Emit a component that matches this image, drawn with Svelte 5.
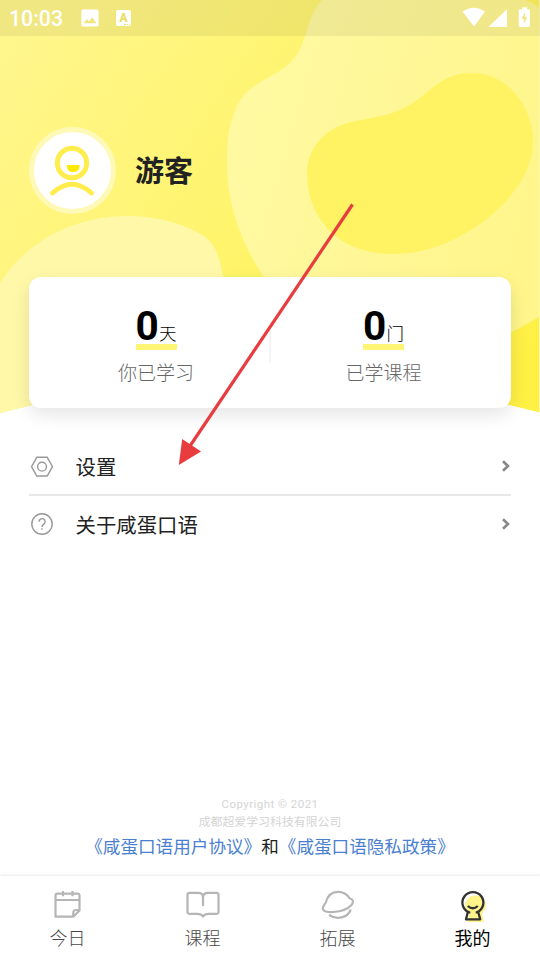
<script lang="ts">
  type Stat = { value: number; unit: string; label: string };
  type Tab = { id: string; label: string };

  const stats: Stat[] = [
    { value: 0, unit: '天', label: '你已学习' },
    { value: 0, unit: '门', label: '已学课程' }
  ];

  const menu = [
    { id: 'settings', label: '设置' },
    { id: 'about', label: '关于咸蛋口语' }
  ];

  const tabs: Tab[] = [
    { id: 'today', label: '今日' },
    { id: 'course', label: '课程' },
    { id: 'explore', label: '拓展' },
    { id: 'mine', label: '我的' }
  ];

  let active = $state('mine');
</script>

<div class="screen">
  <svg class="backdrop" viewBox="0 0 540 420" aria-hidden="true">
    <defs>
      <linearGradient id="sun" gradientUnits="userSpaceOnUse" x1="0" y1="60" x2="500" y2="400">
        <stop offset="0" stop-color="#fff68c" />
        <stop offset="0.5" stop-color="#fff46a" />
        <stop offset="1" stop-color="#fff044" />
      </linearGradient>
      <linearGradient id="pale" gradientUnits="userSpaceOnUse" x1="230" y1="150" x2="540" y2="240">
        <stop offset="0" stop-color="#fff9a2" />
        <stop offset="1" stop-color="#fff58a" />
      </linearGradient>
      <clipPath id="dome">
        <path d="M0 0H539.4V412.5Q270 342 0 413Z" />
      </clipPath>
    </defs>
    <g clip-path="url(#dome)">
      <rect width="540" height="420" fill="url(#sun)" />
      <path
        fill="url(#pale)"
        d="M322 0C307 17 308 34 300 49C287 75 260 77 245 94C230 112 227 136 227 162C227 207 242 243 263 276C310 350 395 366 455 351C490 343 518 331 540 316V9C536 5 531 2 526 0Z"
      />
      <path
        fill="#fff263"
        d="M307 173C307 154 318 138 332 130C354 116 382 122 411 104C431 92 441 73 472 73C508 73 533 107 533 142C533 166 518 192 493 214C463 239 428 254 393 254C334 254 307 214 307 173Z"
      />
      <path
        fill="#fff8a8"
        d="M0 283C27 240 76 216 127 216C158 216 185 224 204 236C217 246 220 259 223 277L240 420H0Z"
      />
    </g>
  </svg>

  <div class="statusbar">
    <span class="clock">10:03</span>
    <svg class="picture" width="18" height="18" viewBox="0 0 18 18" aria-hidden="true">
      <path
        fill="#fff"
        fill-rule="evenodd"
        d="M2 .5h14a1.6 1.6 0 0 1 1.6 1.6v13.8a1.6 1.6 0 0 1-1.6 1.6H2a1.6 1.6 0 0 1-1.6-1.6V2.1A1.6 1.6 0 0 1 2 .5zM2.6 14.3h12.8L11.2 8.6 8 12.5 5.8 9.9z"
      />
    </svg>
    <span class="letter">A<i></i></span>
    <svg class="signals" width="70" height="22" viewBox="0 0 70 22" aria-hidden="true">
      <path fill="#fff" d="M.5 4.6Q12 -3 23 4.6L12 19.5Z" />
      <path fill="#fff" d="M45 2V20H26.5Z" />
      <path
        fill="#fff"
        fill-rule="evenodd"
        d="M60 .2h5V2.2h1.5a1.4 1.4 0 0 1 1.4 1.4V18.6A1.4 1.4 0 0 1 66.5 20h-8.4a1.4 1.4 0 0 1-1.4-1.4V3.6A1.4 1.4 0 0 1 58.1 2.2H60zM63 5 59.8 12h2v5l3.4-7H63z"
      />
    </svg>
  </div>

  <header class="profile">
    <div class="avatar">
      <svg width="78" height="78" viewBox="0 0 78 78" aria-hidden="true">
        <circle cx="38" cy="31" r="14.7" fill="none" stroke="#ffec4d" stroke-width="5" />
        <path fill="#ffea00" d="M33 33H45.5V34.5C45.5 38 43 40 39.3 40S33 38 33 34.5Z" />
        <path
          fill="none"
          stroke="#ffec4d"
          stroke-width="5"
          stroke-linecap="round"
          d="M18.5 61Q38 43.5 57.5 61"
        />
      </svg>
    </div>
    <h1>游客</h1>
  </header>

  <section class="stats">
    {#each stats as s (s.label)}
      <div class="stat">
        <p class="amount"><b>{s.value}</b><span>{s.unit}</span></p>
        <p class="caption">{s.label}</p>
      </div>
    {/each}
  </section>

  <nav class="menu">
    {#each menu as item (item.id)}
      <button class="row" type="button">
        <svg class="row-icon" width="26" height="26" viewBox="0 0 26 26" aria-hidden="true">
          {#if item.id === 'settings'}
            <path d="M7.8 4.3h10.4L23.5 13.7l-5.300 9.300H7.800L2.500 13.700z" />
            <circle cx="13" cy="13.7" r="4.4" />
          {:else}
            <circle cx="13" cy="13" r="10.2" />
            <path d="M10.1 10.7a3 3 0 1 1 4.7 2.4c-1.2.8-1.8 1.3-1.8 2.8M13 17.2v1.5" />
          {/if}
        </svg>
        <span class="row-label">{item.label}</span>
        <svg class="chevron" width="10" height="14" viewBox="0 0 10 14" aria-hidden="true">
          <path d="M2 2.2 7 7 2 11.8" />
        </svg>
      </button>
    {/each}
  </nav>

  <footer class="legal">
    <p class="copyright">Copyright © 2021</p>
    <p class="company">成都超爱学习科技有限公司</p>
    <p class="terms"><a href="#terms">《咸蛋口语用户协议》</a>和<a href="#privacy">《咸蛋口语隐私政策》</a></p>
  </footer>

  <nav class="tabs">
    {#each tabs as tab (tab.id)}
      <button class="tab" class:active={active === tab.id} type="button" onclick={() => (active = tab.id)}>
        <svg width="36" height="34" viewBox="0 0 36 34" aria-hidden="true">
          {#if tab.id === 'today'}
            <path d="M5.5 28.6V7.6a2 2 0 0 1 2-2H27.5a2 2 0 0 1 2 2V22.5l-6 6.1H5.5zM5.5 12H29.5M13 3V8.2M22.5 3V8.2M29.5 22h-3.5q-2.500 0-2.700 2.500V28.600" />
          {:else if tab.id === 'course'}
            <path d="M18 18V9.5Q18 4.8 13 4.8H4.5A2 2 0 0 0 2.5 6.8V24.2A1.6 1.6 0 0 0 4.1 25.8H12Q16.5 25.8 18 28.5Q19.5 25.8 24 25.8H31.9A1.6 1.6 0 0 0 33.5 24.2V6.8A2 2 0 0 0 31.5 4.8H23Q18 4.8 18 9.5" />
          {:else if tab.id === 'explore'}
            <path d="M5.8 14.5C7.5 8 12 3.8 18 3.8C23 3.8 27 6 29.5 10.3C33.5 11.5 34 14.2 31.5 17C28 20.8 20.5 23.5 13.5 24C7 24.5 3 23.3 2.8 20.5C2.7 18.5 4.3 17 5.8 14.5ZM9 27C16.5 31.8 27.5 30.5 30.8 21.5" />
          {:else}
            <g class="shade">
              <circle cx="20.5" cy="17.5" r="10.3" />
              <path d="M14.5 25H27L29 34H12.5Z" />
            </g>
            <path class="ink" d="M14 24.3A10.5 10.5 0 1 1 21.8 24.3M12 24.3h3.3M20.7 24.3H24M12.8 24.3 11 31.3H25.2L23.3 24.3" />
            <path class="ink" d="M12.8 18Q17.8 22.6 22.8 18" />
          {/if}
        </svg>
        <span>{tab.label}</span>
      </button>
    {/each}
  </nav>

  <!-- pointer towards the settings row -->
  <svg class="pointer" viewBox="0 0 180 266" aria-hidden="true">
    <path class="shaft" d="M176.5 6.5 14 248" />
    <path class="head" d="M2.8 267 6.2 241 25 253.5Z" />
  </svg>
</div>

<style>
  :global(body) {
    background: #fff;
  }

  .screen {
    position: relative;
    display: flex;
    flex-direction: column;
    width: 540px;
    height: 960px;
    overflow: hidden;
    background: #fff;
    color: #222;
    font-family: Roboto, 'Noto Sans CJK SC', sans-serif;
  }

  p,
  h1 {
    margin: 0;
  }

  button {
    border: 0;
    padding: 0;
    background: none;
    color: inherit;
    font: inherit;
    cursor: pointer;
  }

  .backdrop {
    position: absolute;
    top: 0;
    left: 0;
    width: 540px;
    height: 420px;
  }

  .statusbar {
    position: relative;
    display: flex;
    align-items: center;
    box-sizing: border-box;
    height: 36px;
    padding: 0 9px;
    background: rgba(0, 0, 0, 0.06);
    color: #fff;
  }

  .clock {
    width: 72px;
    padding-top: 2px;
    font-size: 21.3px;
    font-weight: 500;
    line-height: 36px;
  }

  .letter {
    position: relative;
    width: 15px;
    height: 16px;
    margin-left: 17px;
    border-radius: 2px;
    background: #fff;
    color: #e9e06b;
    font-size: 12px;
    font-weight: 900;
    line-height: 16px;
    text-align: center;
  }

  .letter i {
    position: absolute;
    right: 1px;
    bottom: 1px;
    width: 6px;
    border-bottom: 1px dotted #e9e06b;
  }

  .signals {
    margin-left: auto;
    margin-right: -1px;
    margin-bottom: 1px;
  }

  .profile {
    position: relative;
    display: flex;
    align-items: center;
    gap: 19px;
    height: 88px;
    margin: 90px 29px 0;
  }

  .avatar {
    width: 77px;
    height: 77px;
    border: 5px solid #fff9b8;
    border-radius: 50%;
    background: #fff;
  }

  .avatar svg {
    display: block;
  }

  h1 {
    padding-top: 3px;
    font-size: 29px;
    font-weight: 700;
    line-height: 40px;
  }

  .stats {
    position: relative;
    display: grid;
    grid-template-columns: 1fr 1fr;
    flex: none;
    box-sizing: border-box;
    height: 131px;
    margin: 62.6px 29px 0;
    padding: 26px 0 0;
    border-radius: 12px;
    background: #fff;
    box-shadow: 0 7px 18px rgba(0, 0, 0, 0.1);
  }

  .stat {
    display: flex;
    flex-direction: column;
    align-items: center;
    padding-left: 13px;
  }

  .stat + .stat {
    position: relative;
    padding: 0 14px 0 0;
  }

  .stat + .stat::before {
    content: '';
    position: absolute;
    top: 27px;
    left: -1px;
    width: 2px;
    height: 33px;
    background: #f4f4f4;
  }

  .amount {
    display: flex;
    align-items: baseline;
    height: 41px;
    border-bottom: 6px solid #fff574;
    color: #000;
    line-height: 46px;
  }

  .amount b {
    width: 23.5px;
    font-size: 40.5px;
  }

  .amount span {
    font-size: 17.5px;
    font-weight: 300;
  }

  .caption {
    margin-top: 9.5px;
    color: #666;
    font-size: 19px;
    font-weight: 300;
    line-height: 30px;
  }

  .menu {
    display: flex;
    flex-direction: column;
    margin: 30.4px 29px 0;
  }

  .row {
    display: flex;
    align-items: center;
    height: 58px;
    text-align: left;
  }

  .row:first-child {
    box-sizing: border-box;
    border-bottom: 2px solid #e8e8e8;
  }

  .row + .row {
    height: 57px;
  }

  .row-icon {
    fill: none;
    stroke: #999;
    stroke-width: 1.4;
  }

  .row-label {
    flex: 1;
    margin-left: 20.5px;
    font-size: 20.4px;
  }

  .chevron {
    fill: none;
    stroke: #888;
    stroke-width: 2.6;
  }

  .legal {
    display: flex;
    flex-direction: column;
    align-items: center;
    margin-top: auto;
    padding-bottom: 13px;
    color: #d4d4d4;
  }

  .copyright {
    font-size: 11.5px;
    letter-spacing: 0.45px;
    line-height: 16px;
  }

  .company {
    padding-top: 1px;
    font-size: 11.9px;
    line-height: 18px;
  }

  .terms {
    color: #222;
    font-size: 17.6px;
    line-height: 32px;
  }

  .terms a {
    color: #4a80cf;
    text-decoration: none;
  }

  .tabs {
    display: grid;
    grid-template-columns: repeat(4, 1fr);
    flex: none;
    height: 84px;
    box-shadow: 0 -1px 3px rgba(0, 0, 0, 0.09);
  }

  .tab {
    display: flex;
    flex-direction: column;
    align-items: center;
    padding-top: 12px;
    color: #484848;
    font-size: 18px;
    font-weight: 300;
    line-height: 34px;
  }

  .tab svg {
    flex: none;
    fill: none;
    stroke: #b5b5b5;
    stroke-width: 2.2;
    stroke-linejoin: round;
  }

  .tab .ink {
    stroke: #333;
    stroke-width: 2.3;
  }

  .tab .shade {
    fill: #fff38a;
    stroke: none;
  }

  .tab.active {
    color: #000;
    font-weight: 400;
  }

  .pointer {
    position: absolute;
    top: 198px;
    left: 176px;
    width: 180px;
    height: 266px;
    overflow: visible;
    pointer-events: none;
  }

  .shaft {
    fill: none;
    stroke: #e83c3f;
    stroke-width: 3.2;
  }

  .head {
    fill: #e83c3f;
  }
</style>
